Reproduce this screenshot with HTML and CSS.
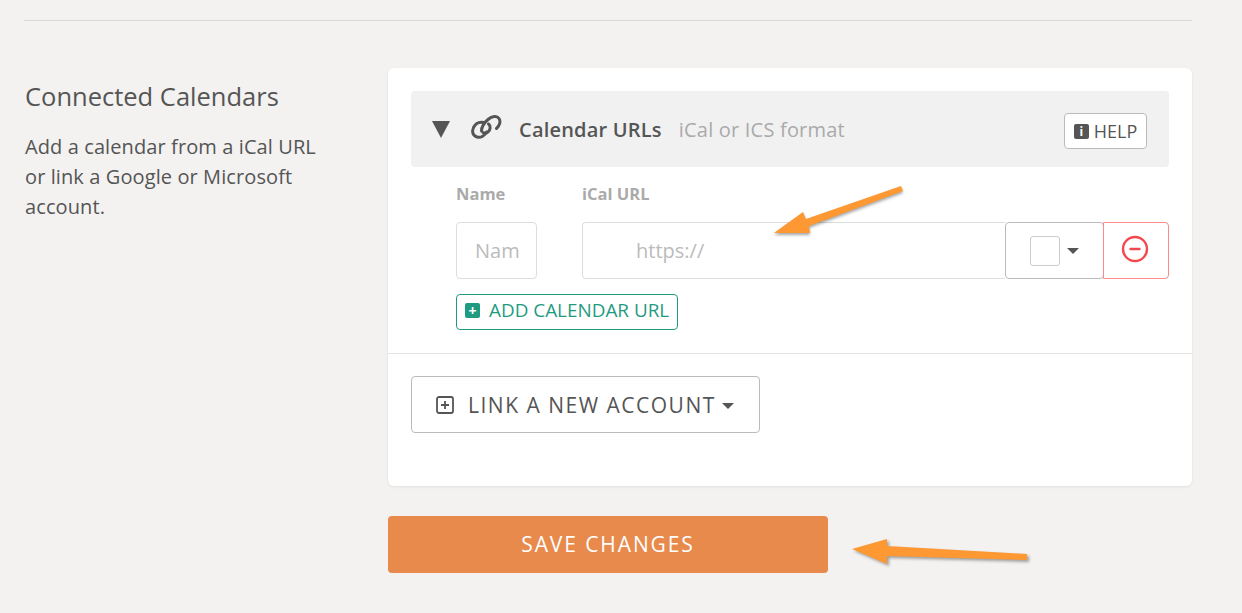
FILE: index.html
```html
<!DOCTYPE html>
<html lang="en">
<head>
  <meta charset="UTF-8">
  <meta name="viewport" content="width=device-width, initial-scale=1.0">
  <title>Connected Calendars</title>
  <link rel="stylesheet" href="styles.css">
</head>
<body>

<div class="settings-page">
  <hr class="section-divider">

  <!-- Connected calendars section -->
  <section class="settings-row">
    <div class="settings-intro">
      <h2 class="settings-title">Connected Calendars</h2>
      <p class="settings-desc">Add a calendar from a iCal URL or link a Google or Microsoft account.</p>
    </div>

    <div class="settings-main">
      <div class="calendar-card">
        <div class="card-top">
          <div class="urls-header">
            <span class="urls-toggle"></span>
            <svg class="urls-link-icon" width="32" height="26" viewBox="0 0 32 26" fill="none" stroke="#555" stroke-width="3" stroke-linecap="round">
              <path d="M14 8.5 C9.5 7.5 5.5 9.5 3.5 13.5 C1.5 18 3 22 7 23 C11 24 15 21.5 16.5 18"/>
              <path d="M11.5 17 C11.5 12.5 14.5 8.5 18 5.5 C22 2 27 1.5 29 4.5 C31 7.5 29.5 12 26.5 14.5"/>
              <path d="M18.5 10 C21 12 20.5 15.5 18 18 C16.5 19.5 14.5 19.5 13 18.5"/>
            </svg>
            <strong class="urls-title">Calendar URLs</strong>
            <span class="urls-hint">iCal or ICS format</span>
            <button class="help-btn" type="button"><span class="help-icon">i</span>HELP</button>
          </div>

          <div class="url-form">
            <div class="url-fields">
              <div class="field field-name">
                <label class="field-label">Name</label>
                <div class="fake-input">Nam</div>
              </div>
              <div class="field field-url">
                <label class="field-label">iCal URL</label>
                <div class="input-group">
                  <div class="fake-input url-input">https://</div>
                  <div class="color-select">
                    <span class="color-swatch"></span>
                    <span class="caret"></span>
                  </div>
                  <button class="remove-btn" type="button">
                    <svg width="28" height="28" viewBox="0 0 28 28" fill="none" stroke="#f4484e" stroke-width="2.4">
                      <circle cx="14" cy="14" r="12"/>
                      <path d="M9.5 14h9" stroke-linecap="round"/>
                    </svg>
                  </button>
                </div>
              </div>
            </div>
            <button class="add-btn" type="button">
              <span class="add-icon">+</span>ADD CALENDAR URL
            </button>
          </div>
        </div>

        <div class="card-bottom">
          <button class="link-btn" type="button">
            <svg width="18" height="18" viewBox="0 0 18 18" fill="none" stroke="#555" stroke-width="1.8">
              <rect x="1" y="1" width="16" height="16" rx="2"/>
              <path d="M9 5v8M5 9h8"/>
            </svg>
            LINK A NEW ACCOUNT
            <span class="caret"></span>
          </button>
        </div>
      </div>

      <button class="save-btn" type="button">SAVE CHANGES</button>
    </div>
  </section>
</div>

<!-- Arrows pasted on top of the screenshot -->
<svg class="note-arrow arrow-url" width="150" height="60" viewBox="0 0 150 60">
  <path class="arrow-shadow" d="M4 49 L33 28 L36 35 L131 2 L133 7 L39 42 L40 49 Z"/>
  <path d="M4 47 L33 26 L36 33 L131 0 L133 5 L39 40 L40 47 Z"/>
</svg>
<svg class="note-arrow arrow-save" width="190" height="50" viewBox="0 0 190 50">
  <path class="arrow-shadow" d="M2 13 L37 3 L37 10 L177 18 L177 24 L37 20 L37 28 Z" transform="translate(2 2)"/>
  <path d="M2 13 L37 3 L37 10 L177 18 L177 24 L37 20 L37 28 Z"/>
</svg>

</body>
</html>
```

FILE: styles.css
```css
/* Basic page styling */
* {
  box-sizing: border-box;
}

body {
  margin: 0;
  height: 613px;
  overflow: hidden;
  position: relative;
  background-color: #f3f2f1;
  color: #555;
  font-family: "Open Sans", "Noto Sans", sans-serif;
}

button {
  font-family: inherit;
  cursor: pointer;
}

.settings-page {
  padding: 20px 50px 0 24px;
}

.section-divider {
  margin: 0;
  border: 0;
  border-top: 1px solid #d9d8d7;
}

.settings-row {
  display: flex;
  margin-top: 47px;
}

/* Left column */
.settings-intro {
  width: 364px;
  flex: none;
  padding-left: 1px;
}

.settings-title {
  margin: 12px 0 0;
  font-size: 25.5px;
  line-height: 32px;
  font-weight: 400;
}

.settings-desc {
  margin: 20px 0 0;
  width: 300px;
  font-size: 20px;
  letter-spacing: 0.1px;
  line-height: 30px;
}

/* Card */
.settings-main {
  flex: 1;
}

.calendar-card {
  height: 418px;
  background-color: #fff;
  border-radius: 6px;
  box-shadow: 0 1px 3px rgba(0, 0, 0, 0.08);
}

.card-top {
  padding: 23px 23px 23px;
  height: 286px;
  border-bottom: 1px solid #e4e4e4;
}

.urls-header {
  display: flex;
  align-items: center;
  height: 76px;
  padding: 0 22px 0 21px;
  background-color: #f1f1f1;
  border-radius: 4px;
}

.urls-toggle {
  width: 0;
  height: 0;
  border-left: 9.5px solid transparent;
  border-right: 9.5px solid transparent;
  border-top: 17px solid #555;
}

.urls-link-icon {
  margin-left: 20px;
  margin-top: -4px;
}

.urls-title {
  margin-left: 17px;
  font-size: 20px;
  letter-spacing: 0.2px;
  font-weight: 600;
}

.urls-hint {
  margin-left: 17px;
  font-size: 20px;
  letter-spacing: 0.2px;
  color: #aaa;
}

.help-btn {
  margin-left: auto;
  margin-top: 4px;
  height: 36px;
  width: 83px;
  padding: 0;
  display: flex;
  align-items: center;
  justify-content: center;
  gap: 5px;
  font-size: 18px;
  color: #555;
  background-color: #fff;
  border: 1px solid #bbb;
  border-radius: 4px;
}

.help-icon {
  width: 15px;
  height: 15px;
  border-radius: 2px;
  background-color: #555;
  color: #fff;
  font-size: 12px;
  font-weight: 700;
  line-height: 15px;
  text-align: center;
}

/* URL form */
.url-form {
  padding-left: 45px;
}

.url-fields {
  display: flex;
  gap: 45px;
  margin-top: 15px;
}

.field-name {
  width: 81px;
  flex: none;
}

.field-url {
  flex: 1;
}

.field-label {
  display: block;
  height: 40px;
  font-size: 16.5px;
  line-height: 24px;
  font-weight: 700;
  color: #aaa;
}

.fake-input {
  height: 57px;
  padding-left: 18px;
  font-size: 20px;
  line-height: 56px;
  color: #bbb;
  background-color: #fff;
  border: 1px solid #ddd;
  border-radius: 4px;
  overflow: hidden;
  white-space: nowrap;
}

.input-group {
  display: flex;
}

.url-input {
  flex: 1;
  padding-left: 53px;
  border-right: 0;
  border-radius: 4px 0 0 4px;
}

.color-select {
  width: 99px;
  height: 57px;
  display: flex;
  align-items: center;
  justify-content: center;
  gap: 7px;
  background-color: #fff;
  border: 1px solid #bbb;
  border-radius: 4px;
}

.color-swatch {
  width: 30px;
  height: 30px;
  border: 1px solid #ccc;
  border-radius: 3px;
}

.caret {
  display: inline-block;
  width: 0;
  height: 0;
  border-left: 6px solid transparent;
  border-right: 6px solid transparent;
  border-top: 6px solid #555;
}

.remove-btn {
  width: 66px;
  height: 57px;
  margin-left: -1px;
  padding: 0 2px 3px 0;
  display: flex;
  align-items: center;
  justify-content: center;
  background-color: #fff;
  border: 1px solid #ff8a8a;
  border-radius: 0 4px 4px 0;
}

.add-btn {
  display: flex;
  align-items: center;
  gap: 9px;
  width: 222px;
  height: 36px;
  margin-top: 15px;
  padding: 0 0 4px 8px;
  font-size: 18.9px;
  white-space: nowrap;
  color: #1f9b82;
  background-color: #fff;
  border: 1px solid #1f9b82;
  border-radius: 4px;
}

.add-icon {
  width: 15px;
  height: 15px;
  border-radius: 2px;
  background-color: #1f9b82;
  color: #fff;
  font-size: 14px;
  font-weight: 700;
  line-height: 15px;
  text-align: center;
}

.card-bottom {
  padding: 22px 23px;
}

.link-btn {
  display: flex;
  align-items: center;
  gap: 14px;
  width: 349px;
  height: 57px;
  padding: 0 0 0 24px;
  font-size: 21px;
  letter-spacing: 1.5px;
  white-space: nowrap;
  color: #555;
  background-color: #fff;
  border: 1px solid #bbb;
  border-radius: 4px;
}

.link-btn .caret {
  margin-top: 3px;
  margin-left: -8px;
}

.save-btn {
  display: block;
  width: 440px;
  height: 57px;
  margin-top: 30px;
  padding: 0 0 2px;
  font-size: 21px;
  letter-spacing: 1.9px;
  color: #fff;
  background-color: #e88a4c;
  border: 0;
  border-radius: 4px;
}

/* Arrows on top of the screenshot */
.note-arrow {
  position: absolute;
  fill: #fd9832;
  overflow: visible;
}

.arrow-shadow {
  fill: rgba(0, 0, 0, 0.35);
  filter: blur(1.5px);
}

.arrow-url {
  left: 770px;
  top: 186px;
}

.arrow-save {
  left: 850px;
  top: 536px;
}
```
